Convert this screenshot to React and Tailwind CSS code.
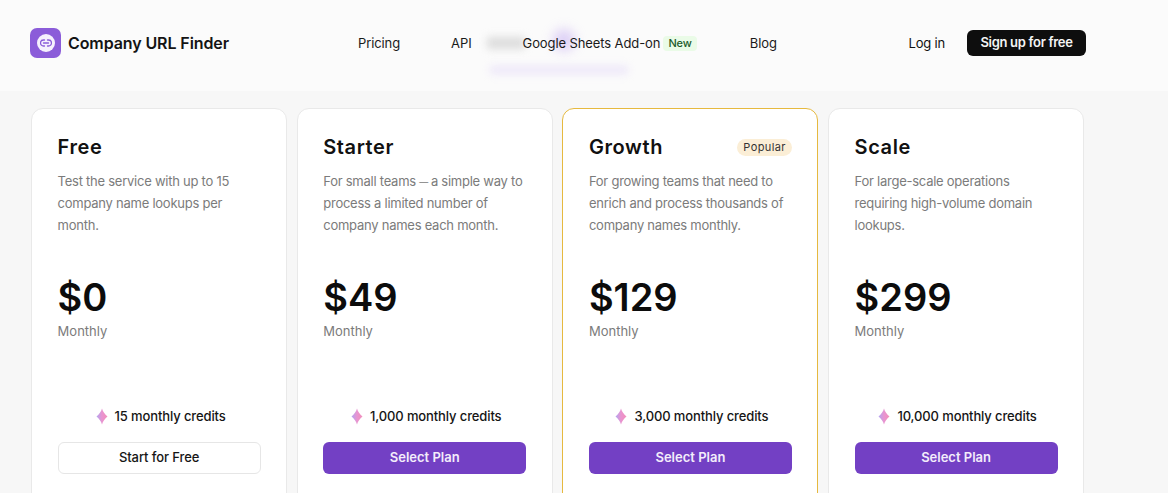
import React from "react";

const plans = [
  { name: "Free", desc: ["Test the service with up to 15", "company name lookups per", "month."], price: "$0", credits: "15 monthly credits", cta: "Start for Free", free: true },
  { name: "Starter", desc: [<React.Fragment key="a">For small teams <span className="text-[9px] leading-[0] tracking-[-0.8px] align-[1.5px]">—</span> a simple way to</React.Fragment>, "process a limited number of", "company names each month."], price: "$49", credits: "1,000 monthly credits", cta: "Select Plan" },
  { name: "Growth", desc: ["For growing teams that need to", "enrich and process thousands of", "company names monthly."], price: "$129", credits: "3,000 monthly credits", cta: "Select Plan", popular: true },
  { name: "Scale", desc: ["For large-scale operations", "requiring high-volume domain", "lookups."], price: "$299", credits: "10,000 monthly credits", cta: "Select Plan" },
];

function Diamond() {
  return (
    <svg width="12" height="17" viewBox="0 0 12 17" className="shrink-0">
      <defs>
        <linearGradient id="dg" x1="0" y1="0" x2="1" y2="0">
          <stop offset="0" stopColor="#b3a4f0" />
          <stop offset="0.5" stopColor="#e994d0" />
          <stop offset="1" stopColor="#f28fbb" />
        </linearGradient>
      </defs>
      <path d="M6 0.5 C6.8 3.5 8.8 6.2 11.5 8.5 C8.8 10.8 6.8 13.5 6 16.5 C5.2 13.5 3.2 10.8 0.5 8.5 C3.2 6.2 5.2 3.5 6 0.5 Z" fill="url(#dg)" />
    </svg>
  );
}

function Logo() {
  return (
    <div className="w-[31px] h-[30px] rounded-[7px] bg-[#8b5cd9] flex items-center justify-center">
      <div className="w-[18px] h-[18px] rounded-full bg-[#f6f1fd] flex items-center justify-center">
        <svg width="12" height="8" viewBox="0 0 12 8" fill="none" stroke="#8b5cd9" strokeWidth="1.3" strokeLinecap="round" strokeLinejoin="round">
          <path d="M4.5 1 H3.5 A3 3 0 0 0 3.5 7 H4.5" />
          <path d="M7.5 1 H8.5 A3 3 0 0 1 8.5 7 H7.5" />
          <path d="M3.5 4 H8.5" />
        </svg>
      </div>
    </div>
  );
}

function Card({ p }) {
  return (
    <div className={`w-[256px] h-[420px] shrink-0 rounded-[12px] bg-white border ${p.popular ? "border-[#e6b93f]" : "border-[#e9e9e9]"} pl-[25.6px] pr-[25.4px] pt-[24px] flex flex-col`}>
      <div className="flex items-center justify-between h-[28px]">
        <span className="text-[20px] leading-[28px] font-semibold tracking-[0.6px] text-[#111111]">{p.name}</span>
        {p.popular && (
          <span className="h-[17px] px-[6px] rounded-full bg-[#fbeed6] text-[11px] leading-[17px] tracking-[0.4px] text-[#333333]">Popular</span>
        )}
      </div>
      <p className="mt-[9px] text-[13px] leading-[22px] tracking-[-0.25px] text-[#7b7b7b] whitespace-nowrap">
        {p.desc.map((l, i) => (
          <span key={i} className="block h-[22px]">{l}</span>
        ))}
      </p>
      <div className="mt-[38px] text-[38px] leading-[46px] font-semibold text-[#0c0c0c]">{p.price}</div>
      <div className="mt-[2px] text-[13px] leading-[18px] text-[#7b7b7b]">Monthly</div>
      <div className="mt-[66px] flex items-center justify-center gap-[7px] h-[20px] pl-[3px]">
        <Diamond />
        <span className="text-[13px] leading-[20px] font-medium tracking-[-0.12px] text-[#151515]">{p.credits}</span>
      </div>
      {p.free ? (
        <button className="mt-[16px] w-full h-[32px] rounded-[6px] text-[13px] font-medium tracking-[-0.1px] bg-white border border-[#e6e6e6] text-[#151515]">
          {p.cta}
        </button>
      ) : (
        <button className="mt-[16px] w-full h-[32px] rounded-[6px] text-[13px] font-semibold bg-[#7340c4] text-[#f3edfb]">
          {p.cta}
        </button>
      )}
    </div>
  );
}

export default function App() {
  return (
    <div className="w-[1168px] h-[493px] overflow-hidden bg-[#f7f7f7] font-['Inter','Liberation_Sans',sans-serif]">
      <header className="relative h-[91px] bg-[#fbfbfb] pl-[30px] pr-[82px] flex items-center justify-between pb-[6px]">
        <div className="absolute left-[487px] top-[37px] w-[38px] h-[12px] bg-[#cfcfcf] blur-[4px] opacity-70" />
        <div className="absolute left-[553px] top-[29px] w-[22px] h-[22px] rounded-full bg-[#c9b3f2] blur-[6px] opacity-60" />
        <div className="absolute left-[490px] top-[66px] w-[138px] h-[8px] bg-[#ddd0f7] blur-[4px] opacity-50" />
        <div className="flex items-center gap-[7px] w-[300px]">
          <Logo />
          <span className="text-[16px] font-semibold tracking-[-0.1px] text-[#141414] whitespace-nowrap">Company URL Finder</span>
        </div>
        <nav className="relative flex-1 flex items-center text-[13px] tracking-[-0.1px] text-[#1a1a1a] whitespace-nowrap pl-[28px] pt-[2px]">
          <span>Pricing</span>
          <span className="ml-[51px]">API</span>
          <span className="ml-[51px]">Google Sheets Add-on</span>
          <span className="ml-[3px] px-[5px] h-[15px] rounded bg-[#eafbe7] text-[11px] leading-[15px] font-medium text-[#1d5c2a]">New</span>
          <span className="ml-[53px]">Blog</span>
        </nav>
        <div className="flex items-center gap-[22px] whitespace-nowrap">
          <span className="text-[13px] tracking-[-0.2px] pt-[2px] text-[#111111]">Log in</span>
          <button className="h-[26px] w-[119px] rounded-[6px] bg-[#0e0e0e] text-[13px] font-semibold tracking-[-0.3px] pt-[1px] text-[#f5f5f5]">Sign up for free</button>
        </div>
      </header>
      <main className="pl-[31px] pt-[17px] flex gap-[9.67px]">
        {plans.map((p) => (
          <Card key={p.name} p={p} />
        ))}
      </main>
    </div>
  );
}
